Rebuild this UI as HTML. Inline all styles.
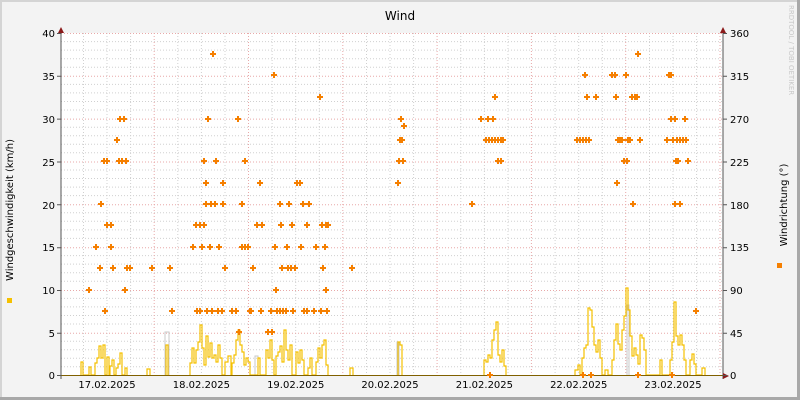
<!DOCTYPE html>
<html><head><meta charset="utf-8"><style>
html,body{margin:0;padding:0;background:#f3f3f3}
svg{display:block}
text{font-family:"DejaVu Sans","Liberation Sans",sans-serif;fill:#000}
</style></head><body>
<svg width="800" height="400" viewBox="0 0 800 400" xmlns="http://www.w3.org/2000/svg">
<defs>
<polygon id="d" points="-1,-3 1,-3 1,-1 3,-1 3,1 1,1 1,3 -1,3 -1,1 -3,1 -3,-1 -1,-1" fill="#f57f00"/>
</defs>
<rect x="0" y="0" width="800" height="400" fill="#f3f3f3"/>
<rect x="0" y="0" width="800" height="2" fill="#d4d4d4"/>
<rect x="0" y="0" width="2" height="400" fill="#d4d4d4"/>
<rect x="0" y="397" width="800" height="3" fill="#a8a8a8"/>
<rect x="797" y="0" width="3" height="400" fill="#a8a8a8"/>
<rect x="61" y="33" width="662" height="343" fill="#fff"/>
<g stroke="#d0d0d0" stroke-width="1" stroke-dasharray="1,2">
<path d="M61 41.6H723M61 50.1H723M61 58.7H723M61 67.2H723M61 84.4H723M61 92.9H723M61 101.5H723M61 110H723M61 127.2H723M61 135.7H723M61 144.3H723M61 152.8H723M61 170H723M61 178.5H723M61 187.1H723M61 195.6H723M61 212.8H723M61 221.3H723M61 229.9H723M61 238.4H723M61 255.6H723M61 264.1H723M61 272.7H723M61 281.2H723M61 298.4H723M61 306.9H723M61 315.5H723M61 324H723M61 341.2H723M61 349.7H723M61 358.3H723M61 366.8H723"/>
<path d="M83.5 33V376M107 33V376M130.6 33V376M177.8 33V376M201.4 33V376M225 33V376M272.1 33V376M295.7 33V376M319.3 33V376M366.5 33V376M390 33V376M413.6 33V376M460.8 33V376M484.4 33V376M508 33V376M555.1 33V376M578.7 33V376M602.3 33V376M649.5 33V376M673 33V376M696.6 33V376"/>
</g>
<g stroke="#e8a8a8" stroke-width="1" stroke-dasharray="1,2">
<path d="M61 33.5H723M61 76.3H723M61 119.1H723M61 162H723M61 204.8H723M61 247.7H723M61 290.5H723M61 333.3H723"/>
<path d="M154.2 33V376M248.5 33V376M342.8 33V376M437.1 33V376M531.4 33V376M625.7 33V376M720 33V376"/>
</g>
<g fill="none" stroke="#c8c8c8" stroke-width="1">
<path d="M165 375V332H169V375M255 375V356H258V375M397 375V342H399V375M627 375V305H629V375"/>
</g>
<g fill="none" stroke="#f5c000" stroke-width="1.2">
<path d="M81 375V362H83V375H89V367H91V375H95V363H97V358H99V346H101V358H103V345H105V375H107V357H109V375H110V366H112V360H114V375H116V368H118V364H120V353H122V375H125V368H127V375"/>
<path d="M147 375V369H150V375M166 375V345H168V375"/>
<path d="M190 375V363H192V348H194V363H196V350H198V342H200V325H202V348H204V365H206V336H208V357H210V343H212V358H214V355H216V362H218V345H220V358H222V375H225V362H228V356H231V375"/>
<path d="M232 375V363H234V355H236V340H238V330H240V345H242V352H244V365H246V358H248V362H250V375H258V358H260V375H266V350H268V358H270V340H272V360H274V375H276V356H278V352H280V346H282V362H284V330H286V350H288V360H290V345H292V375H296V352H298V363H300V350H302V360H304V375H308V368H310V358H312V375H316V362H318V348H320V358H322V345H324V340H326V365H328V375"/>
<path d="M350 375V368H353V375M398 375V342H400V345H402V375"/>
<path d="M484 375V360H486V362H488V355H490V358H492V340H494V330H496V322H498V355H500V362H502V350H504V366H506V375"/>
<path d="M575 375V370H578V365H580V375H582V358H584V348H586V345H588V308H590V310H592V327H594V345H596V352H598V340H600V358H602V375H605V370H608V375H612V360H614V340H616V324H618V344H620V350H622V330H624V316H626V288H628V310H630V336H632V356H634V348H636V355H638V364H640V335H642V338H644V350H646V375H660V360H662V375H670V360H672V342H674V302H676V336H678V345H680V335H682V345H684V360H686V375H690V360H692V354H694V364H696V375H702V368H705V375"/>
</g>
<rect x="61" y="375" width="662" height="1" fill="#806000"/>
<g>
<use href="#d" x="89" y="290"/><use href="#d" x="96" y="247"/><use href="#d" x="100" y="268"/><use href="#d" x="101" y="204"/><use href="#d" x="104" y="161"/><use href="#d" x="105" y="311"/><use href="#d" x="107" y="161"/><use href="#d" x="107" y="225"/><use href="#d" x="111" y="225"/><use href="#d" x="111" y="247"/><use href="#d" x="113" y="268"/><use href="#d" x="117" y="140"/><use href="#d" x="119" y="161"/><use href="#d" x="120" y="119"/><use href="#d" x="122" y="161"/><use href="#d" x="124" y="119"/><use href="#d" x="126" y="161"/><use href="#d" x="125" y="290"/><use href="#d" x="127" y="268"/><use href="#d" x="130" y="268"/><use href="#d" x="152" y="268"/><use href="#d" x="170" y="268"/><use href="#d" x="172" y="311"/>
<use href="#d" x="193" y="247"/><use href="#d" x="196" y="225"/><use href="#d" x="197" y="311"/><use href="#d" x="200" y="311"/><use href="#d" x="200" y="225"/><use href="#d" x="202" y="247"/><use href="#d" x="204" y="161"/><use href="#d" x="204" y="225"/><use href="#d" x="206" y="183"/><use href="#d" x="206" y="204"/><use href="#d" x="208" y="119"/><use href="#d" x="207" y="311"/><use href="#d" x="210" y="247"/><use href="#d" x="211" y="204"/><use href="#d" x="212" y="311"/><use href="#d" x="213" y="54"/><use href="#d" x="215" y="204"/><use href="#d" x="216" y="161"/><use href="#d" x="218" y="311"/><use href="#d" x="219" y="247"/><use href="#d" x="222" y="311"/><use href="#d" x="223" y="183"/><use href="#d" x="223" y="204"/><use href="#d" x="225" y="268"/><use href="#d" x="232" y="311"/><use href="#d" x="236" y="311"/><use href="#d" x="238" y="119"/><use href="#d" x="239" y="332"/><use href="#d" x="242" y="204"/><use href="#d" x="242" y="247"/><use href="#d" x="245" y="247"/><use href="#d" x="245" y="161"/><use href="#d" x="248" y="247"/><use href="#d" x="250" y="311"/><use href="#d" x="251" y="311"/><use href="#d" x="253" y="268"/><use href="#d" x="257" y="225"/><use href="#d" x="260" y="183"/><use href="#d" x="261" y="311"/><use href="#d" x="262" y="225"/><use href="#d" x="268" y="332"/><use href="#d" x="271" y="311"/><use href="#d" x="272" y="332"/>
<use href="#d" x="274" y="75"/><use href="#d" x="275" y="247"/><use href="#d" x="276" y="290"/><use href="#d" x="277" y="311"/><use href="#d" x="280" y="311"/><use href="#d" x="280" y="204"/><use href="#d" x="281" y="225"/><use href="#d" x="282" y="268"/><use href="#d" x="283" y="311"/><use href="#d" x="286" y="311"/><use href="#d" x="287" y="247"/><use href="#d" x="288" y="268"/><use href="#d" x="289" y="204"/><use href="#d" x="291" y="268"/><use href="#d" x="292" y="225"/><use href="#d" x="293" y="311"/><use href="#d" x="295" y="268"/><use href="#d" x="297" y="183"/><use href="#d" x="300" y="183"/><use href="#d" x="301" y="247"/><use href="#d" x="303" y="204"/><use href="#d" x="304" y="311"/><use href="#d" x="307" y="311"/><use href="#d" x="307" y="225"/><use href="#d" x="309" y="204"/><use href="#d" x="314" y="311"/><use href="#d" x="316" y="247"/><use href="#d" x="320" y="97"/><use href="#d" x="321" y="311"/><use href="#d" x="322" y="225"/><use href="#d" x="323" y="268"/><use href="#d" x="325" y="247"/><use href="#d" x="326" y="225"/><use href="#d" x="327" y="311"/><use href="#d" x="328" y="225"/><use href="#d" x="326" y="290"/><use href="#d" x="352" y="268"/>
<use href="#d" x="398" y="183"/><use href="#d" x="399" y="161"/><use href="#d" x="400" y="140"/><use href="#d" x="401" y="119"/><use href="#d" x="402" y="140"/><use href="#d" x="403" y="161"/><use href="#d" x="404" y="126"/>
<use href="#d" x="472" y="204"/><use href="#d" x="481" y="119"/><use href="#d" x="486" y="140"/><use href="#d" x="488" y="119"/><use href="#d" x="489" y="140"/><use href="#d" x="492" y="140"/><use href="#d" x="493" y="119"/><use href="#d" x="495" y="97"/><use href="#d" x="495" y="140"/><use href="#d" x="498" y="140"/><use href="#d" x="498" y="161"/><use href="#d" x="501" y="140"/><use href="#d" x="501" y="161"/><use href="#d" x="503" y="140"/><use href="#d" x="490" y="375"/>
<use href="#d" x="577" y="140"/><use href="#d" x="580" y="140"/><use href="#d" x="583" y="140"/><use href="#d" x="585" y="75"/><use href="#d" x="586" y="140"/><use href="#d" x="589" y="140"/><use href="#d" x="587" y="97"/><use href="#d" x="596" y="97"/><use href="#d" x="612" y="75"/><use href="#d" x="615" y="75"/><use href="#d" x="616" y="97"/><use href="#d" x="618" y="140"/><use href="#d" x="620" y="140"/><use href="#d" x="622" y="140"/><use href="#d" x="617" y="183"/><use href="#d" x="624" y="161"/><use href="#d" x="626" y="75"/><use href="#d" x="627" y="161"/><use href="#d" x="628" y="140"/><use href="#d" x="630" y="140"/><use href="#d" x="632" y="97"/><use href="#d" x="633" y="204"/><use href="#d" x="635" y="97"/><use href="#d" x="637" y="97"/><use href="#d" x="638" y="54"/><use href="#d" x="640" y="140"/><use href="#d" x="583" y="375"/><use href="#d" x="591" y="375"/><use href="#d" x="638" y="375"/>
<use href="#d" x="667" y="140"/><use href="#d" x="669" y="75"/><use href="#d" x="671" y="75"/><use href="#d" x="671" y="119"/><use href="#d" x="673" y="140"/><use href="#d" x="675" y="119"/><use href="#d" x="675" y="204"/><use href="#d" x="676" y="161"/><use href="#d" x="677" y="140"/><use href="#d" x="678" y="161"/><use href="#d" x="680" y="140"/><use href="#d" x="680" y="204"/><use href="#d" x="683" y="140"/><use href="#d" x="685" y="119"/><use href="#d" x="686" y="140"/><use href="#d" x="688" y="161"/><use href="#d" x="696" y="311"/><use href="#d" x="672" y="375"/>
</g>
<rect x="60.5" y="33" width="1" height="346" fill="#555"/>
<rect x="722.5" y="33" width="1" height="346" fill="#555"/>
<polygon points="58,33 61,27 64,33" fill="#8b1a1a"/>
<polygon points="720,33 723,27 726,33" fill="#8b1a1a"/>
<polygon points="723,373 729,376 723,379" fill="#8b1a1a"/>
<g stroke="#555"><path d="M57 33.5H61M57 76.3H61M57 119.1H61M57 162H61M57 204.8H61M57 247.7H61M57 290.5H61M57 333.3H61M57 375.5H61M723 33.5H727M723 76.3H727M723 119.1H727M723 162H727M723 204.8H727M723 247.7H727M723 290.5H727M723 333.3H727M723 375.5H727"/></g>
<g font-size="10" text-anchor="end">
<text x="55" y="37">40</text><text x="55" y="80">35</text><text x="55" y="123">30</text><text x="55" y="166">25</text><text x="55" y="209">20</text><text x="55" y="251">15</text><text x="55" y="294">10</text><text x="55" y="337">5</text><text x="55" y="379">0</text>
</g>
<g font-size="10" text-anchor="start">
<text x="730" y="37">360</text><text x="730" y="80">315</text><text x="730" y="123">270</text><text x="730" y="166">225</text><text x="730" y="209">180</text><text x="730" y="251">135</text><text x="730" y="294">90</text><text x="730" y="337">45</text><text x="730" y="379">0</text>
</g>
<g font-size="10" text-anchor="middle">
<text x="107" y="388">17.02.2025</text><text x="201.4" y="388">18.02.2025</text><text x="295.7" y="388">19.02.2025</text><text x="390" y="388">20.02.2025</text><text x="484.4" y="388">21.02.2025</text><text x="578.7" y="388">22.02.2025</text><text x="673" y="388">23.02.2025</text>
</g>
<text x="400" y="20" font-size="12" text-anchor="middle">Wind</text>
<text transform="translate(13,210) rotate(-90)" font-size="10" text-anchor="middle">Windgeschwindigkeit (km/h)</text>
<text transform="translate(787,205) rotate(-90)" font-size="10" text-anchor="middle">Windrichtung (°)</text>
<text transform="translate(789,5) rotate(90)" font-size="7" style="fill:#c8c8c8">RRDTOOL / TOBI OETIKER</text>
<rect x="7" y="298" width="5" height="5" fill="#f5c000"/>
<rect x="777" y="263" width="5" height="5" fill="#f57f00"/>
</svg>
</body></html>
